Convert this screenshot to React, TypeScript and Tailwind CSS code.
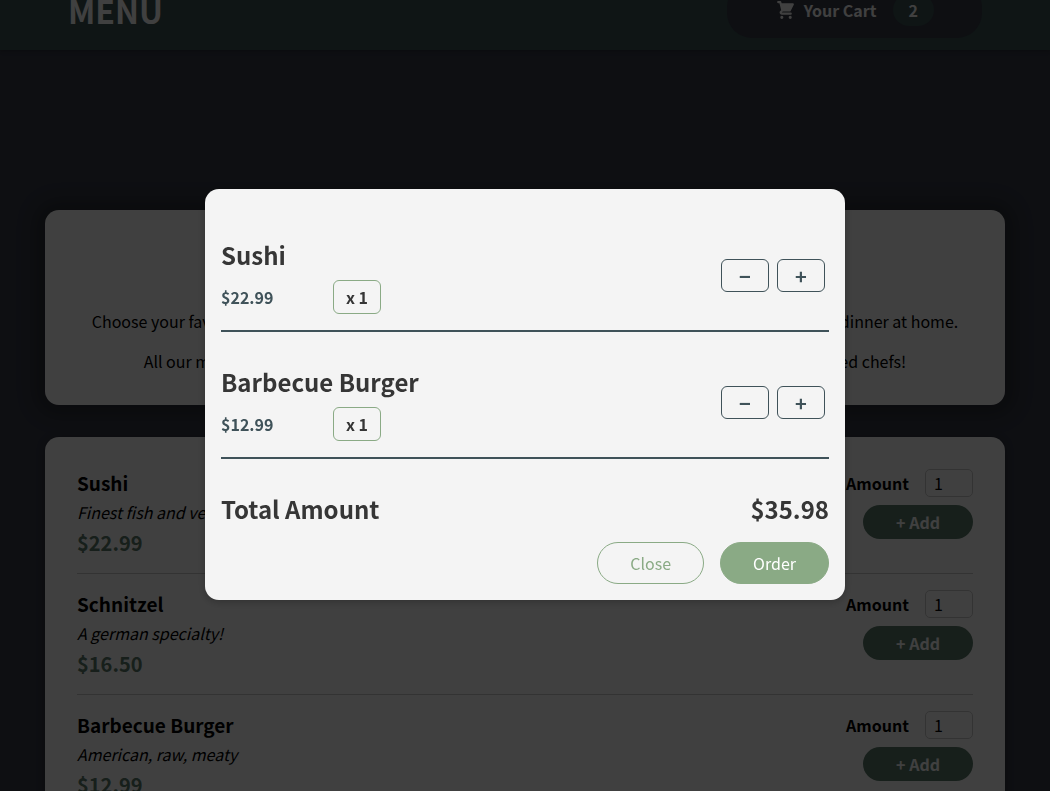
import { useId } from "react";

type Meal = { name: string; description: string; price: string };
type CartLine = { name: string; price: string; amount: number };

const meals: Meal[] = [
  { name: "Sushi", description: "Finest fish and veggies", price: "$22.99" },
  { name: "Schnitzel", description: "A german specialty!", price: "$16.50" },
  { name: "Barbecue Burger", description: "American, raw, meaty", price: "$12.99" },
  { name: "Green Bowl", description: "Healthy...and green...", price: "$18.99" },
];

const cart: CartLine[] = [
  { name: "Sushi", price: "$22.99", amount: 1 },
  { name: "Barbecue Burger", price: "$12.99", amount: 1 },
];

function CartIcon() {
  return (
    <svg viewBox="0 0 20 20" fill="currentColor" className="h-[21px] w-[21px]" aria-hidden="true">
      <path d="M3 1a1 1 0 000 2h1.22l.305 1.222a.997.997 0 00.01.042l1.358 5.43-.893.892C3.74 11.846 4.632 14 6.414 14H15a1 1 0 000-2H6.414l1-1H14a1 1 0 00.894-.553l3-6A1 1 0 0017 3H6.28l-.31-1.243A1 1 0 005 1H3zM16 16.5a1.5 1.5 0 11-3 0 1.5 1.5 0 013 0zM6.5 18a1.5 1.5 0 100-3 1.5 1.5 0 000 3z" />
    </svg>
  );
}

function Header() {
  return (
    <header className="-mt-[30px] flex h-20 items-center justify-between bg-[#3c5454] px-[68px] text-white shadow-[0_1px_4px_rgba(0,0,0,0.25)]">
      <h1 className="text-[32px] leading-[46px] font-bold">MENU</h1>
      <button
        type="button"
        className="flex items-center rounded-[25px] bg-[#383c48] px-12 py-3 text-base font-bold"
      >
        <span className="mr-2">
          <CartIcon />
        </span>
        <span>Your Cart</span>
        <span className="ml-4 rounded-[25px] bg-[#3c5454] px-4 py-1 leading-6">2</span>
      </button>
    </header>
  );
}

function Summary() {
  return (
    <section className="mx-auto mt-40 flex w-[91.5%] max-w-[960px] flex-col gap-4 rounded-[14px] bg-white px-4 pt-9 pb-8 text-center leading-6 text-black shadow-[0_1px_18px_10px_rgba(0,0,0,0.25)]">
      <h2 className="text-2xl leading-[47px] font-bold">Delicious Food, Delivered To You</h2>
      <p>
        Choose your favorite meal from our broad selection of available meals and enjoy a delicious
        lunch or dinner at home.
      </p>
      <p>
        All our meals are cooked with high-quality ingredients, just-in-time and of course by
        experienced chefs!
      </p>
    </section>
  );
}

function MealRow({ meal }: { meal: Meal }) {
  const id = useId();
  return (
    <li className="flex justify-between border-b border-[#ccc] pb-4">
      <div>
        <h3 className="text-[19px] leading-7 font-bold">{meal.name}</h3>
        <p className="pt-[3px] pb-[5px] leading-6 italic">{meal.description}</p>
        <p className="text-xl leading-7 font-bold text-[#5c7c6c]">{meal.price}</p>
      </div>
      <form className="flex flex-col items-end gap-2">
        <div className="flex items-center gap-4">
          <label htmlFor={id} className="font-bold">
            Amount
          </label>
          <input
            id={id}
            type="number"
            min={1}
            defaultValue={1}
            className="h-7 w-12 rounded-[5px] border border-[#ccc] pl-2"
          />
        </div>
        <button
          type="button"
          className="rounded-[20px] bg-[#5c7c6c] px-[33px] py-1 leading-[26px] font-bold text-white"
        >
          + Add
        </button>
      </form>
    </li>
  );
}

function CartRow({ line }: { line: CartLine }) {
  return (
    <li className="flex items-center justify-between border-b-2 border-[#3f5259] py-4">
      <div>
        <h2 className="text-2xl leading-9 font-bold text-[#363636]">{line.name}</h2>
        <div className="mt-[7px] flex w-40 items-center justify-between font-bold">
          <span className="text-[#3f5259]">{line.price}</span>
          <span className="rounded-md border border-[#8aaa85] px-3 py-1 leading-6 text-[#363636]">
            x {line.amount}
          </span>
        </div>
      </div>
      <div className="mr-1 flex gap-2 text-xl font-bold text-[#3f5259]">
        <button
          type="button"
          aria-label={`Remove one ${line.name}`}
          className="h-[33px] w-12 rounded-md border border-[#3f5259] leading-7"
        >
          −
        </button>
        <button
          type="button"
          aria-label={`Add one ${line.name}`}
          className="h-[33px] w-12 rounded-md border border-[#3f5259] leading-7"
        >
          +
        </button>
      </div>
    </li>
  );
}

function CartDialog() {
  return (
    <div className="fixed inset-0 flex items-start justify-center bg-black/75 pt-[189px]">
      <div
        role="dialog"
        aria-modal="true"
        aria-label="Your cart"
        className="w-[640px] max-w-[90%] rounded-[14px] bg-[#f4f4f4] p-4 shadow-[0_2px_8px_rgba(0,0,0,0.25)]"
      >
        <ul className="flex flex-col gap-4 pt-4">
          {cart.map((line) => (
            <CartRow key={line.name} line={line} />
          ))}
        </ul>
        <div className="mt-4 mb-[15px] flex items-center justify-between pt-4 text-2xl leading-9 font-bold text-[#363636]">
          <span>Total Amount</span>
          <span>$35.98</span>
        </div>
        <div className="flex justify-end gap-4">
          <button
            type="button"
            className="rounded-[25px] border border-[#8aaa85] px-8 py-2 leading-6 text-[#8aaa85]"
          >
            Close
          </button>
          <button
            type="button"
            className="rounded-[25px] border border-[#8aaa85] bg-[#8aaa85] px-8 py-2 leading-6 text-white"
          >
            Order
          </button>
        </div>
      </div>
    </div>
  );
}

export default function App() {
  return (
    <div className="h-screen overflow-hidden bg-[#383c48] font-['Noto_Sans_CJK_JP',sans-serif] text-base text-black">
      <Header />
      <main>
        <Summary />
        <section className="mx-auto mt-8 w-[91.5%] max-w-[960px] rounded-[14px] bg-white p-8 shadow-[0_1px_8px_rgba(0,0,0,0.25)]">
          <ul className="flex flex-col gap-4">
            {meals.map((meal) => (
              <MealRow key={meal.name} meal={meal} />
            ))}
          </ul>
        </section>
      </main>
      <CartDialog />
    </div>
  );
}
